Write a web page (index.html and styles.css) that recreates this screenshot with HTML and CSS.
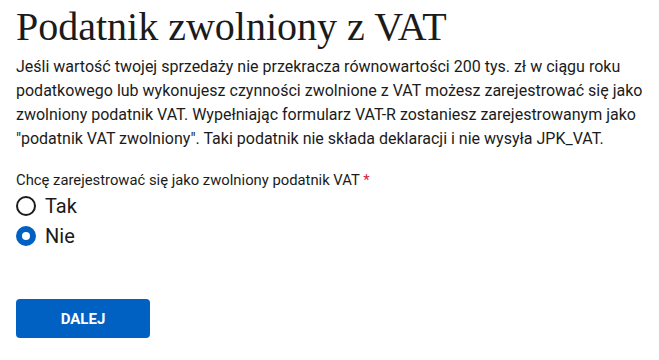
FILE: index.html
```html
<!DOCTYPE html>
<html lang="pl">
<head>
    <meta charset="UTF-8">
    <meta name="viewport" content="width=device-width, initial-scale=1.0">
    <title>Podatnik zwolniony z VAT</title>
    <link rel="stylesheet" href="styles.css">
</head>
<body>
<div class="page">
    <h1 class="title">Podatnik zwolniony z VAT</h1>
    <p class="lead">Jeśli wartość twojej sprzedaży nie przekracza równowartości 200 tys. zł w ciągu roku podatkowego lub wykonujesz czynności zwolnione z VAT możesz zarejestrować się jako zwolniony podatnik VAT. Wypełniając formularz VAT-R zostaniesz zarejestrowanym jako "podatnik VAT zwolniony". Taki podatnik nie składa deklaracji i nie wysyła JPK_VAT.</p>

    <fieldset class="question">
        <legend class="question-label">Chcę zarejestrować się jako zwolniony podatnik VAT <span class="required">*</span></legend>
        <label class="radio">
            <input type="radio" name="zwolniony" value="tak">
            <span class="radio-mark"></span>
            <span class="radio-text">Tak</span>
        </label>
        <label class="radio">
            <input type="radio" name="zwolniony" value="nie" checked>
            <span class="radio-mark"></span>
            <span class="radio-text">Nie</span>
        </label>
    </fieldset>

    <button class="btn-next">DALEJ</button>
</div>
</body>
</html>
```

FILE: styles.css
```css
body {
    margin: 0;
    font-family: Roboto, "Liberation Sans", sans-serif;
    color: #1b1b1b;
    background: #fff;
}
.page {
    padding: 0 16px;
}
.title {
    font-family: "Liberation Serif", serif;
    font-weight: normal;
    font-size: 40px;
    line-height: 52px;
    margin: 0;
    padding-top: 1px;
}
.lead {
    font-size: 16px;
    line-height: 24px;
    margin: 2px 0 0;
}
.question {
    border: none;
    margin: 18px 0 0;
    padding: 0;
}
.question-label {
    padding: 0;
    font-size: 14.8px;
    line-height: 22px;
}
.required {
    color: #d4213d;
}
.radio {
    display: flex;
    align-items: center;
    gap: 9px;
    height: 30px;
    cursor: pointer;
}
.radio input {
    display: none;
}
.radio-mark {
    width: 16px;
    height: 16px;
    border: 2px solid #1b1b1b;
    border-radius: 50%;
    background: #fff;
}
.radio input:checked + .radio-mark {
    border: 6px solid #0061c3;
    width: 8px;
    height: 8px;
}
.radio-text {
    font-size: 20px;
}
.btn-next {
    margin-top: 48px;
    width: 134px;
    height: 39px;
    border: none;
    border-radius: 4px;
    background: #0061c3;
    color: #fff;
    font-family: Roboto, "Liberation Sans", sans-serif;
    font-weight: bold;
    font-size: 15px;
    cursor: pointer;
}
```
